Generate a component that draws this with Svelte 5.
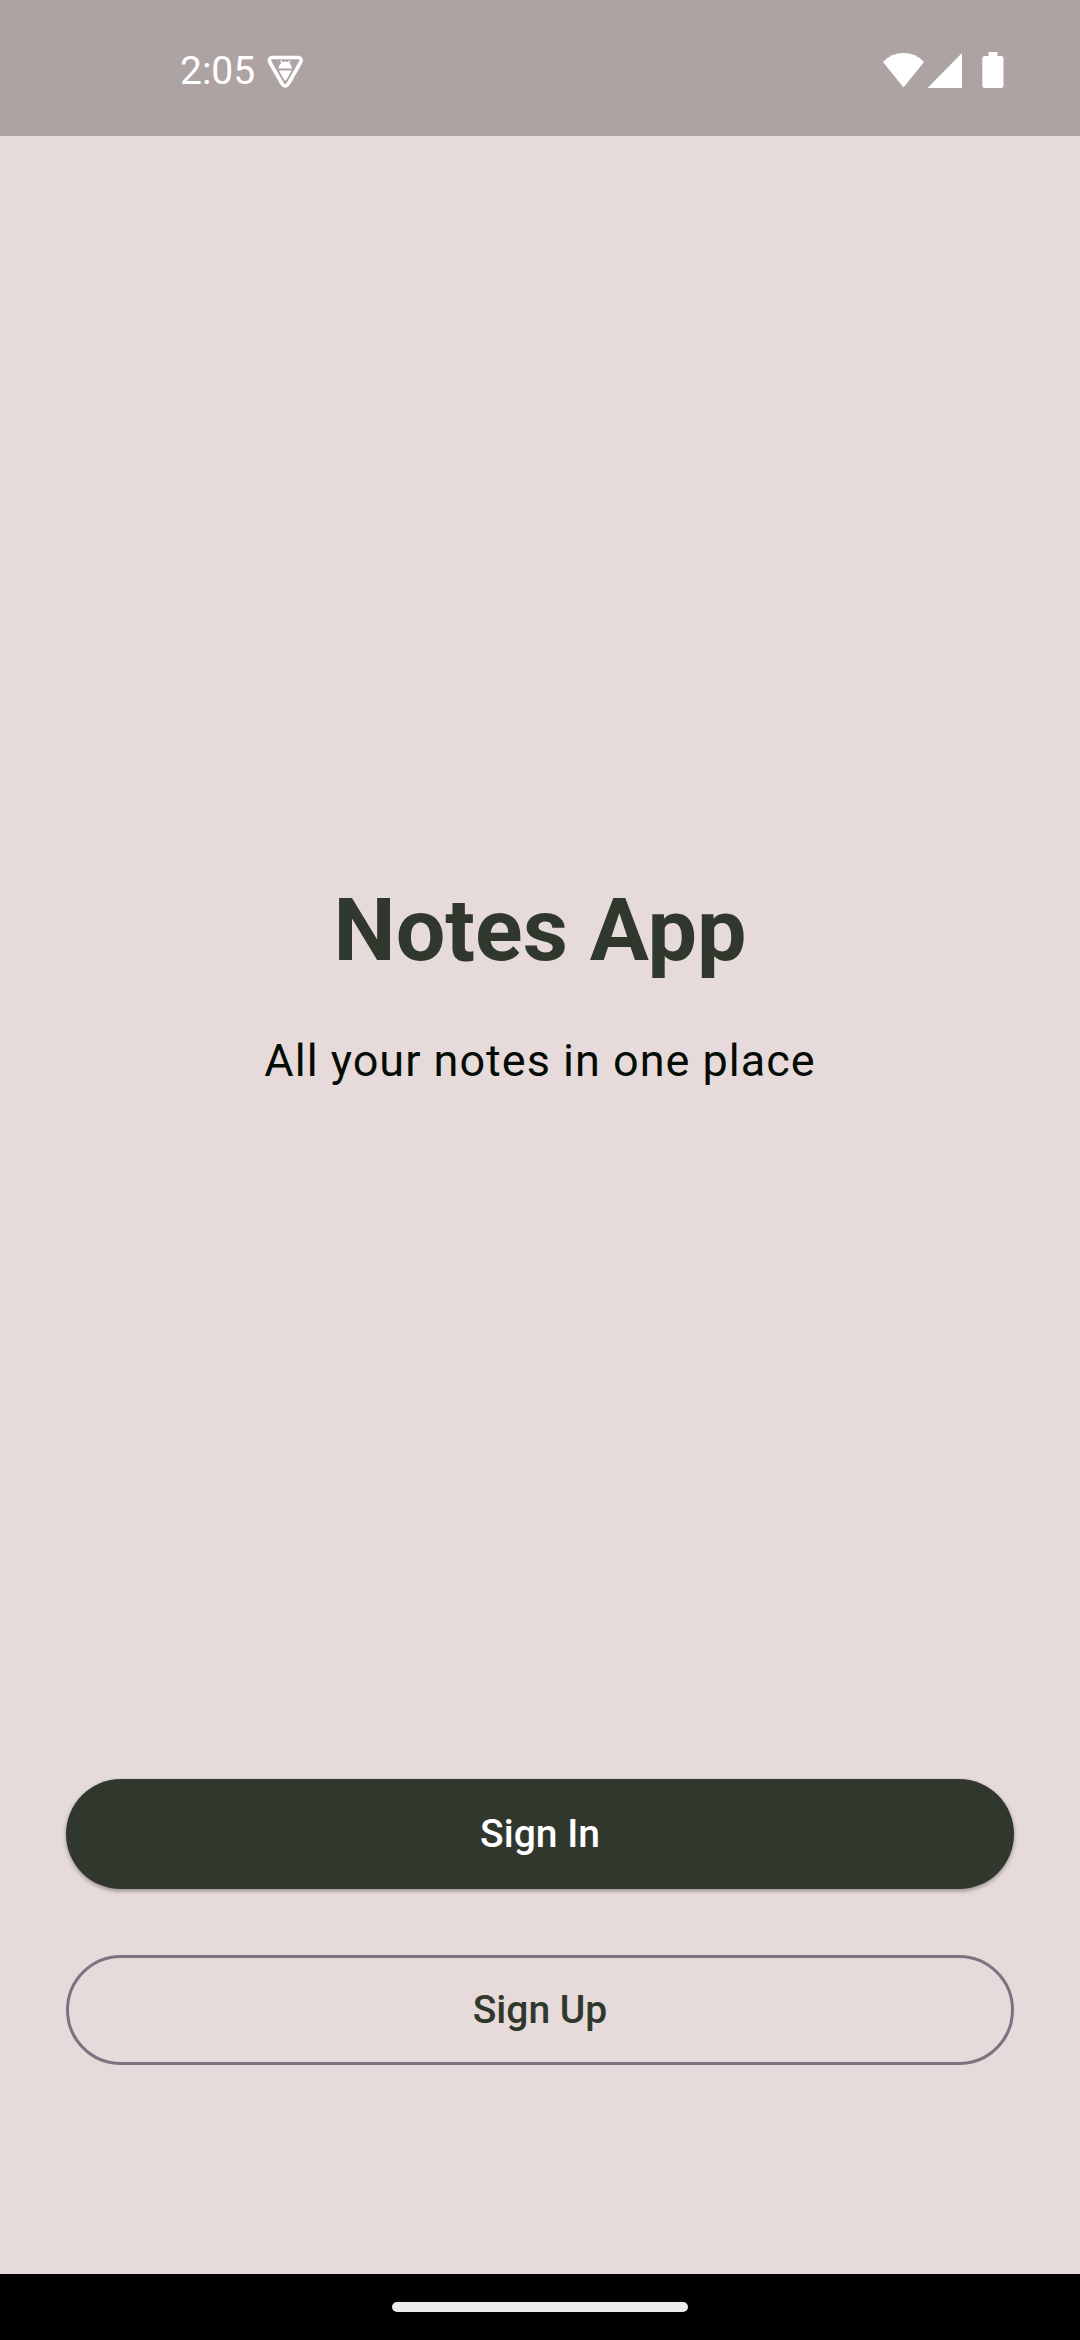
<script>
  let time = $state('2:05');
</script>

<div class="screen">
  <header class="status">
    <div class="group">
      <time class="clock">{time}</time>
      <svg width="36" height="34" viewBox="0 0 36 34" aria-hidden="true">
        <path d="M5.500 3.500H31Q35.500 4 33.500 8.500L21.500 29.500Q18.200 34.500 15 29.500L3 8.500Q1 4 5.500 3.500Z" fill="none" stroke="#fff" stroke-width="3.600" stroke-linejoin="round" />
        <path d="M11.700 14.500A6.600 7 0 0 1 24.900 14.500ZM11.900 16.500H24.700L19.600 25.500Q18.300 28 17 25.500Z" fill="#fff" />
        <path d="M13.800 6.500L15.300 9.500M22.800 6.500L21.300 9.500" stroke="#fff" stroke-width="1.400" />
      </svg>
    </div>
    <div class="icons">
      <svg width="42" height="36" viewBox="0 0 42 36" aria-hidden="true">
        <path d="M1 10Q9 1 21.500 1Q34 1 42 10L21.500 35.500Z" fill="#fff" />
      </svg>
      <svg width="36" height="36" viewBox="0 0 36 36" aria-hidden="true">
        <path d="M35 1V36H.5Z" fill="#fff" />
      </svg>
      <svg class="battery" width="22" height="36" viewBox="0 0 22 36" aria-hidden="true">
        <path d="M6.500 0H15.500V4H19Q21.500 4 21.500 6.500V33.500Q21.500 36 19 36H2.500Q.3 36 .3 33.500V6.500Q.3 4 2.500 4H6.500Z" fill="#fff" />
      </svg>
    </div>
  </header>

  <main>
    <section class="hero">
      <h1>Notes App</h1>
      <p>All your notes in one place</p>
    </section>
    <section class="actions">
      <button class="filled" type="button">Sign In</button>
      <button class="outlined" type="button">Sign Up</button>
    </section>
  </main>

  <footer class="nav">
    <div class="handle"></div>
  </footer>
</div>

<style>
  :global(body) {
    margin: 0;
  }

  .screen {
    display: flex;
    flex-direction: column;
    min-height: 100vh;
    background: #e6dada;
    font-family: Roboto, sans-serif;
  }

  .status {
    display: flex;
    justify-content: space-between;
    align-items: flex-end;
    box-sizing: border-box;
    height: 136px;
    padding: 0 76px 48px 180px;
    background: #ada3a2;
    color: #fff;
  }

  .group,
  .icons {
    display: flex;
    align-items: flex-end;
  }

  .group {
    gap: 12px;
  }

  .clock {
    font-size: 39px;
    line-height: 34px;
  }

  .icons {
    gap: 3px;
  }

  .battery {
    margin-left: 16px;
  }

  svg {
    display: block;
    overflow: visible;
  }

  main {
    flex: 1;
    display: flex;
    flex-direction: column;
    padding: 56px 66px 209px;
  }

  .hero {
    flex: 1;
    display: flex;
    flex-direction: column;
    justify-content: center;
    align-items: center;
    gap: 46px;
    text-align: center;
  }

  h1 {
    margin: 0;
    font-size: 88px;
    font-weight: 700;
    line-height: 104px;
    color: #30382d;
  }

  p {
    margin: 0;
    font-size: 45px;
    line-height: 66px;
    letter-spacing: 1px;
    color: #050b05;
  }

  .actions {
    display: flex;
    flex-direction: column;
    gap: 66px;
  }

  button {
    box-sizing: border-box;
    width: 100%;
    height: 110px;
    border: 0;
    border-radius: 55px;
    font-family: inherit;
    font-size: 39px;
    font-weight: 500;
    line-height: 55px;
  }

  .filled {
    background: #30382d;
    color: #fff;
    box-shadow: 0 2px 4px rgba(0, 0, 0, 0.35);
  }

  .outlined {
    border: 3px solid #7b7480;
    background: transparent;
    color: #30382d;
  }

  .nav {
    display: flex;
    justify-content: center;
    align-items: center;
    height: 66px;
    background: #000;
  }

  .handle {
    width: 296px;
    height: 10px;
    border-radius: 5px;
    background: #ebebeb;
  }
</style>
